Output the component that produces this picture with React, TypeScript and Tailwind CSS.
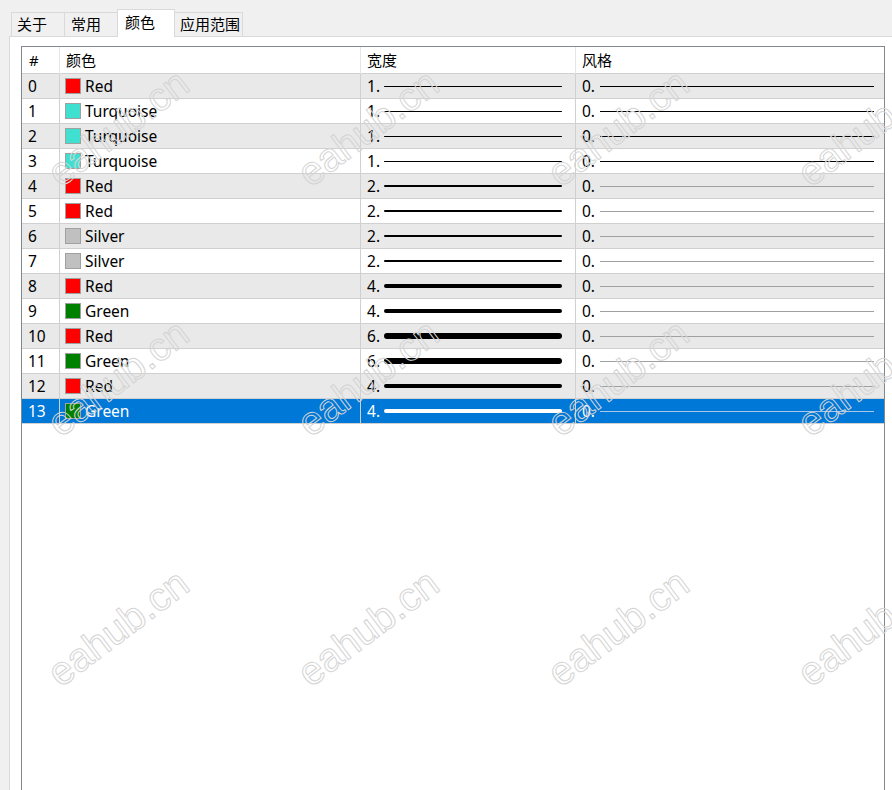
import React from "react";

type Row = { name: string; color: string; width: number };

const rows: Row[] = [
  { name: "Red", color: "#ff0000", width: 1 },
  { name: "Turquoise", color: "#40e0d0", width: 1 },
  { name: "Turquoise", color: "#40e0d0", width: 1 },
  { name: "Turquoise", color: "#40e0d0", width: 1 },
  { name: "Red", color: "#ff0000", width: 2 },
  { name: "Red", color: "#ff0000", width: 2 },
  { name: "Silver", color: "#c0c0c0", width: 2 },
  { name: "Silver", color: "#c0c0c0", width: 2 },
  { name: "Red", color: "#ff0000", width: 4 },
  { name: "Green", color: "#008000", width: 4 },
  { name: "Red", color: "#ff0000", width: 6 },
  { name: "Green", color: "#008000", width: 6 },
  { name: "Red", color: "#ff0000", width: 4 },
  { name: "Green", color: "#008000", width: 4 },
];

const tabs = ["关于", "常用", "颜色", "应用范围"];

const marks: { x: number; y: number }[] = [];
for (let r = 0; r < 3; r++) {
  for (let c = 0; c < 4; c++) {
    marks.push({ x: 50 + c * 250, y: 110 + r * 250 });
  }
}

export default function App() {
  return (
    <div
      className="relative w-[892px] h-[790px] overflow-hidden bg-[#f0f0f0] text-[15px] text-black"
      style={{ fontFamily: '"Noto Sans", "Noto Sans CJK SC", sans-serif' }}
    >
      {/* Tabs */}
      <div className="flex items-end h-[36px] pl-[11px]">
        {tabs.map((t) => {
          const sel = t === "颜色";
          return sel ? (
            <div
              key={t}
              className="relative z-10 -ml-px -mb-px h-[28px] w-[58px] bg-white border-t border-l border-r border-[#d9d9d9] pl-[7px] pt-[1px] leading-[22px]"
            >
              {t}
            </div>
          ) : (
            <div
              key={t}
              className={
                "h-[24px] border border-b-0 border-[#d9d9d9] bg-[#f0f0f0] leading-[22px] pl-[5px] " +
                (t === "关于" ? "w-[54px]" : t === "常用" ? "-ml-px w-[54px] pl-[6px]" : "-ml-px w-[69px]")
              }
            >
              {t}
            </div>
          );
        })}
      </div>

      {/* Panel */}
      <div className="ml-[9px] w-[900px] h-[760px] border border-[#d9d9d9] bg-white pt-[9px] pl-[11px]">
        <div className="w-[864px] h-[760px] border border-[#828790] bg-white">
          {/* Header */}
          <div className="grid grid-cols-[38px_301px_215px_1fr] h-[27px] border-b border-[#d0d0d0] leading-[27px]">
            <div className="pl-[7px] border-r border-[#e5e5e5]">#</div>
            <div className="pl-[6px] border-r border-[#e5e5e5]">颜色</div>
            <div className="pl-[6px] border-r border-[#e5e5e5]">宽度</div>
            <div className="pl-[6px]">风格</div>
          </div>
          {rows.map((r, i) => {
            const sel = i === 13;
            const bg = sel ? "bg-[#0078d7] text-white" : i % 2 === 0 ? "bg-[#e9e9e9]" : "bg-white";
            const sep = "border-[#d0d0d0]";
            const styleLine = sel ? "bg-[#a8c8ea]" : i < 4 ? "bg-black" : "bg-[#a0a0a0]";
            return (
              <div
                key={i}
                className={"grid grid-cols-[38px_301px_215px_1fr] h-[25px] border-b leading-[24px] text-[15.5px] " + sep + " " + bg}
              >
                <div className={"pl-[6px] border-r " + sep}>{i}</div>
                <div className={"flex items-center pl-[5px] border-r " + sep}>
                  <span
                    className="inline-block w-[16px] h-[16px] border border-[#a0a0a0] mr-[4px]"
                    style={{ backgroundColor: r.color }}
                  />
                  <span>{r.name}</span>
                </div>
                <div className={"flex items-center pl-[6px] pr-[13px] border-r " + sep}>
                  <span className="w-[17px] shrink-0">{r.width}.</span>
                  <span
                    className={"flex-1 rounded-full " + (sel ? "bg-white" : "bg-black")}
                    style={{ height: r.width }}
                  />
                </div>
                <div className="flex items-center pl-[6px] pr-[10px]">
                  <span className="w-[18px] shrink-0">0.</span>
                  <span className={"flex-1 h-px " + styleLine} />
                </div>
              </div>
            );
          })}
        </div>
      </div>

      {/* Watermarks */}
      {marks.map((m, k) => (
        <div
          key={k}
          className="pointer-events-none absolute text-[40px] leading-none text-transparent [-webkit-text-stroke:1px_#d4d4d4] -rotate-[37deg] origin-bottom-left"
          style={{ left: m.x + 14, top: m.y + 43, fontFamily: '"Liberation Sans", sans-serif' }}
        >
          eahub.cn
        </div>
      ))}
    </div>
  );
}
